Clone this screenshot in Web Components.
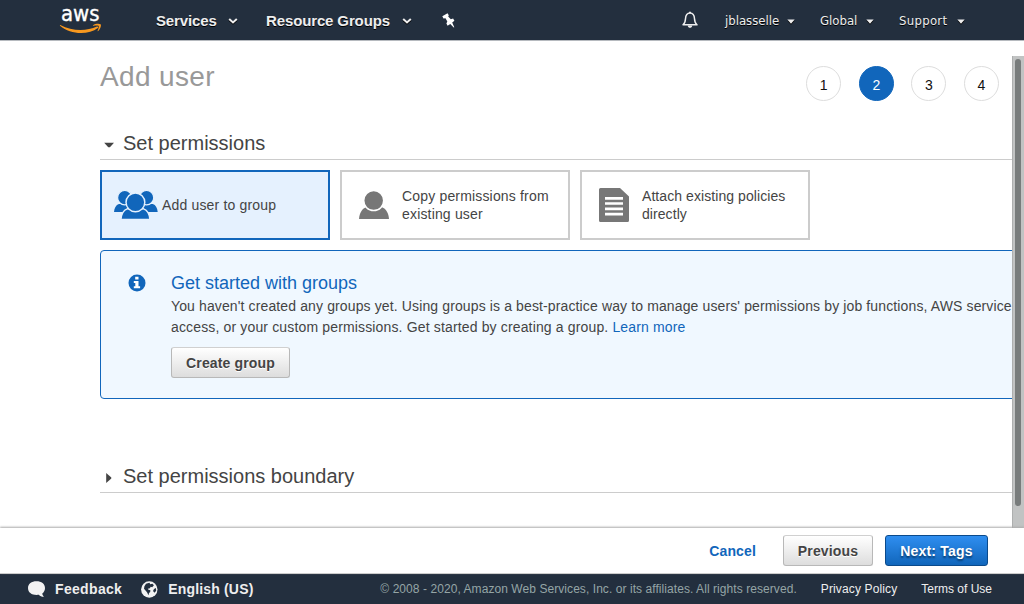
<!DOCTYPE html>
<html lang="en">
<head>
<meta charset="utf-8">
<title>Add user</title>
<style>
html,body{margin:0;height:100%;overflow:hidden;background:#fff}
body{font-family:"Liberation Sans",Arial,sans-serif;font-size:14px;color:#444}
</style>
</head>
<body>
<iam-app></iam-app>
<script>
const define = (name, markup) => customElements.define(name, class extends HTMLElement {
  constructor() {
    super();
    const t = document.createElement('template');
    t.innerHTML = markup;
    this.attachShadow({mode: 'open'}).appendChild(t.content.cloneNode(true));
  }
});

define('aws-logo', `<style>:host{display:block;width:42px;height:26px}svg{display:block;overflow:visible}</style>
<svg width="42" height="26" viewBox="0 0 42 26">
<text x="1" y="13.2" textLength="38.5" lengthAdjust="spacingAndGlyphs" font-family="DejaVu Sans" font-size="21" fill="#fff" stroke="#fff" stroke-width=".35">aws</text>
<path d="M.3 17C12 23.300 26 23.600 37 18.600c1-.4 1.600.6.8 1.300C29 26.800 11 27.200 0 17.700c-.3-.4-.1-.9.3-.7z" fill="#f7981f"/>
<path d="M33 17.200c2.300-1.700 6.500-1.900 7.600-.9 1 .8-.2 5-2.400 6.800-.5.3-.8.1-.6-.4.7-1.600 1.500-3.900 1.100-4.700-.5-.7-3.400-.4-5.100-.2-.6 0-.9-.3-.6-.6z" fill="#f7981f"/></svg>`);

customElements.define('nav-item', class extends HTMLElement {
  constructor() {
    super();
    this.attachShadow({mode: 'open'}).innerHTML = `<style>:host{display:flex;flex:none;align-items:center;justify-content:space-between;color:#eee;font:bold 15px/20px "Liberation Sans",sans-serif;letter-spacing:-.13px;text-shadow:0 1px 0 #000;white-space:nowrap;padding-top:1px}
:host([small]){font:13px/20px "DejaVu Sans Condensed","DejaVu Sans",sans-serif;font-stretch:condensed;letter-spacing:0}
svg{display:block;margin-top:1px;filter:drop-shadow(0 1px 0 #000)}</style><span><slot></slot></span>` +
    (this.hasAttribute('small')
      ? '<svg width="8" height="5"><path d="M.3.5h7.400L4 4.700z" fill="#eee"/></svg>'
      : '<svg width="10" height="6"><path d="M1.200 1 5 4.400 8.800 1" fill="none" stroke="#eee" stroke-width="2"/></svg>');
  }
});

define('top-bar', `<style>:host{display:block;box-sizing:border-box;height:41px;background:#232f3e;border-bottom:1px solid #b6babf}
nav{display:flex;height:40px;align-items:center;padding-left:60px;box-sizing:border-box}
aws-logo{margin:1px 54px 0 0}
.sv{width:82px}.rg{margin-left:28px;width:146px}.pin{margin-left:30px}.bell{margin-left:226px}
.u{margin-left:27px;width:70px}.g{margin-left:25px;width:54px}.s{margin-left:25px;width:66px}.s{letter-spacing:.3px}svg{display:block;flex:none}</style>
<nav><aws-logo></aws-logo><nav-item class="sv">Services</nav-item><nav-item class="rg">Resource Groups</nav-item>
<svg class="pin" width="14" height="15" viewBox="0 0 14 15"><path d="M.3 3.200 5.500.3l1.300 2-.6 1.200 2.600 2.700 2.300-.6 1.300 2.100-2.200 1.700 2.100 4.800-.6.300L8.300 11l-2.700 1.700-1.200-2.200.9-1.900L3.500 5.200l-2 .3z" fill="#fff"/></svg>
<svg class="bell" width="16" height="18" viewBox="0 0 16 18"><path d="M1 13.800c1.900-1.300 2.300-2.500 2.500-6C3.700 4 5.200 2 8 2s4.300 2 4.500 5.800c.2 3.500.6 4.700 2.500 6z" fill="none" stroke="#eee" stroke-width="1.500" stroke-linejoin="round"/><path d="M7 .8h2v1.500H7zM5.700 14.500h4.600C10 17.600 6 17.600 5.700 14.500z" fill="#eee"/></svg>
<nav-item small class="u">jblasselle</nav-item><nav-item small class="g">Global</nav-item><nav-item small class="s">Support</nav-item></nav>`);

define('step-dot', `<style>:host{display:block;box-sizing:border-box;width:35px;height:35px;border:1px solid #ddd;border-radius:50%;font-size:14px;line-height:36px;text-align:center;color:#111;background:#fff}
:host([active]){background:#1166bb;border-color:#1166bb;color:#fff}</style><slot></slot>`);

define('section-title', `<style>:host{display:flex;align-items:center;box-sizing:border-box;height:33px;border-bottom:1px solid #ccc;font-size:20px;line-height:32px;color:#444}
svg{display:block;width:11px;height:12px;margin:4px 8px 0 4px}path{fill:#444}:host([closed]) .open,:host(:not([closed])) .shut{display:none}</style>
<svg viewBox="0 0 11 12"><path class="open" d="M.2 3.700h9.800L5.900 8.300H4.300z"/><path class="shut" d="M2.200 1v10L7.300 6.600V5.400z"/></svg><slot></slot>`);

define('option-card', `<style>:host{display:flex;align-items:center;box-sizing:border-box;width:230px;height:70px;border:2px solid #ccc;background:#fff;line-height:18px;letter-spacing:var(--track,.17px);color:#444}
:host([selected]){border-color:#1166bb;background:#e5f1fe}
.i{width:44px;margin-left:var(--inset,10px);margin-right:calc(16px - var(--inset,10px));display:flex;justify-content:center;flex:none}:host([selected]) .i{margin-left:12px;margin-right:4px}</style><div class="i"><slot name="icon"></slot></div><div><slot></slot></div>`);

define('aws-button', `<style>:host{display:block;box-sizing:border-box;height:31px;border:1px solid #b8b8b8;border-top-color:#d0d0d0;border-radius:3px;background:linear-gradient(#fff,#ddd);font-weight:bold;letter-spacing:.14px;line-height:31px;color:#444;text-align:center;text-shadow:0 1px 0 #fff;white-space:nowrap}
:host([primary]){color:#fff;background:linear-gradient(#2f8ef0,#1166bb);border-color:#0b4a8b;text-shadow:0 2px 2px #07396b;letter-spacing:.2px}</style><slot></slot>`);

define('info-panel', `<style>:host{display:flex;box-sizing:border-box;width:960px;height:149px;border:1px solid #1166bb;border-radius:4px;background:#f0f8ff;padding:20px 0 0 27px}
svg{display:block;flex:none;margin-top:3px}.c{margin-left:25px}
h3{margin:0;font-size:18px;line-height:24px;font-weight:normal;color:#1166bb}
p{margin:1px 0 9px;line-height:21px;white-space:nowrap}.l1{letter-spacing:.125px}.l2{letter-spacing:.15px}a{color:#1166bb}aws-button{width:119px}</style>
<svg width="18" height="18" viewBox="0 0 18 18"><circle cx="9" cy="9" r="8.500" fill="#1166bb"/><path d="M7.200 2.800h3.300v2.700H7.200zM5.800 7h4.700v5.200h1.600V14.200H5.800v-2h1.500V9H5.800z" fill="#fff"/></svg>
<div class="c"><h3>Get started with groups</h3><p><span class="l1">You haven't created any groups yet. Using groups is a best-practice way to manage users' permissions by job functions, AWS service</span><br><span class="l2">access, or your custom permissions. Get started by creating a group. <a>Learn more</a></span></p><aws-button>Create group</aws-button></div>`);

define('scroll-bar', `<style>:host{display:block;box-sizing:border-box;width:12px;margin-top:15px;background:#c1c3c3;border-left:1px solid #adafaf;padding:3px 3px 0 2px;flex:none}
i{display:block;height:447px;width:6px;border-radius:3px;background:#787c7c}</style><i></i>`);

define('main-area', `<style>:host{display:flex;height:487px;flex:none}
.v{flex:1;min-width:0;overflow:hidden;padding-left:100px}
.h{display:flex;justify-content:space-between;height:86px;padding-right:13px}
h1{margin:18px 0 0;font-size:28px;line-height:36px;font-weight:normal;color:#999;letter-spacing:.35px}
.steps{display:flex;gap:17.600px;margin:25px 0 0}
.cards{display:flex;gap:10px;margin:10px 0}svg{display:block}
.at{--track:.07px}.b{margin-top:61px}</style>
<div class="v"><div class="h"><h1>Add user</h1><div class="steps"><step-dot>1</step-dot><step-dot active>2</step-dot><step-dot>3</step-dot><step-dot>4</step-dot></div></div>
<section-title>Set permissions</section-title>
<div class="cards"><option-card selected><svg slot="icon" width="45" height="30" viewBox="0 0 45 30" fill="#1166bb"><path d="M0 22.200c.3-4 2-7.200 5-8.200h9l3 8.200zM44.700 22.200c-.3-4-2-7.200-5-8.200h-9l-3 8.200z"/><g stroke="#e5f1fe" stroke-width="1.200"><circle cx="11" cy="7.500" r="7.300"/><circle cx="33.300" cy="7.500" r="7.300"/></g><g stroke="#e5f1fe" stroke-width="1.500"><path d="M7 29.900c.5-5.500 2.700-9.600 6.500-11h16.800c3.800 1.400 6 5.500 6.500 11z"/><circle cx="21.900" cy="12.300" r="9.600"/></g></svg>Add user to group</option-card>
<option-card><svg slot="icon" width="30" height="28" viewBox="0 0 30 28" fill="#777"><path d="M0 28c.5-6 3-10.300 7-11.700h16c4 1.400 6.500 5.700 7 11.700z"/><circle cx="14.700" cy="9.600" r="10" stroke="#fff" stroke-width="1.500"/></svg>Copy permissions from<br>existing user</option-card>
<option-card class="at"><svg slot="icon" width="30" height="34" viewBox="0 0 30 34"><path d="M1.500 0H21l9 8.500v24a1.500 1.500 0 0 1-1.500 1.500h-27A1.500 1.500 0 0 1 0 32.500v-31A1.500 1.500 0 0 1 1.500 0z" fill="#777"/><path d="M6 10.300h18M6 15.500h18M6 20.800h18M6 26.200h18" stroke="#fff" stroke-width="2.700"/></svg>Attach existing policies<br>directly</option-card></div>
<info-panel></info-panel><section-title class="b" closed>Set permissions boundary</section-title></div><scroll-bar></scroll-bar>`);

define('action-bar', `<style>:host{display:flex;position:relative;flex:none;box-sizing:border-box;height:46px;background:#fff;box-shadow:0 -1px 2px #aaa;align-items:flex-start;justify-content:flex-end;padding:7px 36px 0 0;border-bottom:1px solid #ccc}
a{color:#1166bb;font-weight:bold;line-height:32px;margin-right:27px;letter-spacing:.15px}.p{width:90px;margin-right:12px}.n{width:103px}</style><a>Cancel</a><aws-button class="p">Previous</aws-button><aws-button primary class="n">Next: Tags</aws-button>`);

define('bottom-bar', `<style>:host{display:flex;box-sizing:border-box;height:30px;flex:none;background:#232f3e;color:#eee;align-items:center;padding:0 32px 0 28px;font-size:12px;line-height:30px;white-space:nowrap}
b{font-size:14px;margin-left:9px;letter-spacing:.33px}.e{margin-left:19px}.e+b{margin-left:10px;letter-spacing:.17px}.c{margin-left:auto;color:#95a5a6;letter-spacing:.065px}.t{margin-left:24px}.pp{letter-spacing:.13px}svg{display:block;flex:none}</style>
<svg width="18" height="17" viewBox="0 0 18 17"><path d="M8.500.3C13.500.3 17 3 17 7c0 2.300-1 4.200-2.700 5.500.1 1.300.7 2.200 1.700 3.300-2 .1-3.900-.5-5.100-2C4.500 14.600 0 12 0 7 0 3 3.500.3 8.500.3z" fill="#f3f3f3"/></svg><b>Feedback</b>
<svg class="e" width="17" height="17" viewBox="0 0 17 17"><circle cx="8.300" cy="8.500" r="8.200" fill="#f3f3f3"/><path d="M5 2.800 8.500 1.800l.7 1.400 2.200-.4 1.500 1.400-1.700 2-1.500-.4-.8 1.400-2.100.5.700 1 1.900.6-.2 1.700L8 12l-.5 2.200L6 11.300 3 7.800l.4-2.600zM13 8l1.900-1 .3 2.700-1.700 2.100-1.500-1.900z" fill="#232f3e"/></svg><b>English (US)</b>
<span class="c">© 2008 - 2020, Amazon Web Services, Inc. or its affiliates. All rights reserved.</span><span class="t pp">Privacy Policy</span><span class="t">Terms of Use</span>`);

define('iam-app', `<style>:host{display:flex;flex-direction:column;width:1024px;height:604px;overflow:hidden}top-bar{flex:none}</style><top-bar></top-bar><main-area></main-area><action-bar></action-bar><bottom-bar></bottom-bar>`);
</script>
</body>
</html>
